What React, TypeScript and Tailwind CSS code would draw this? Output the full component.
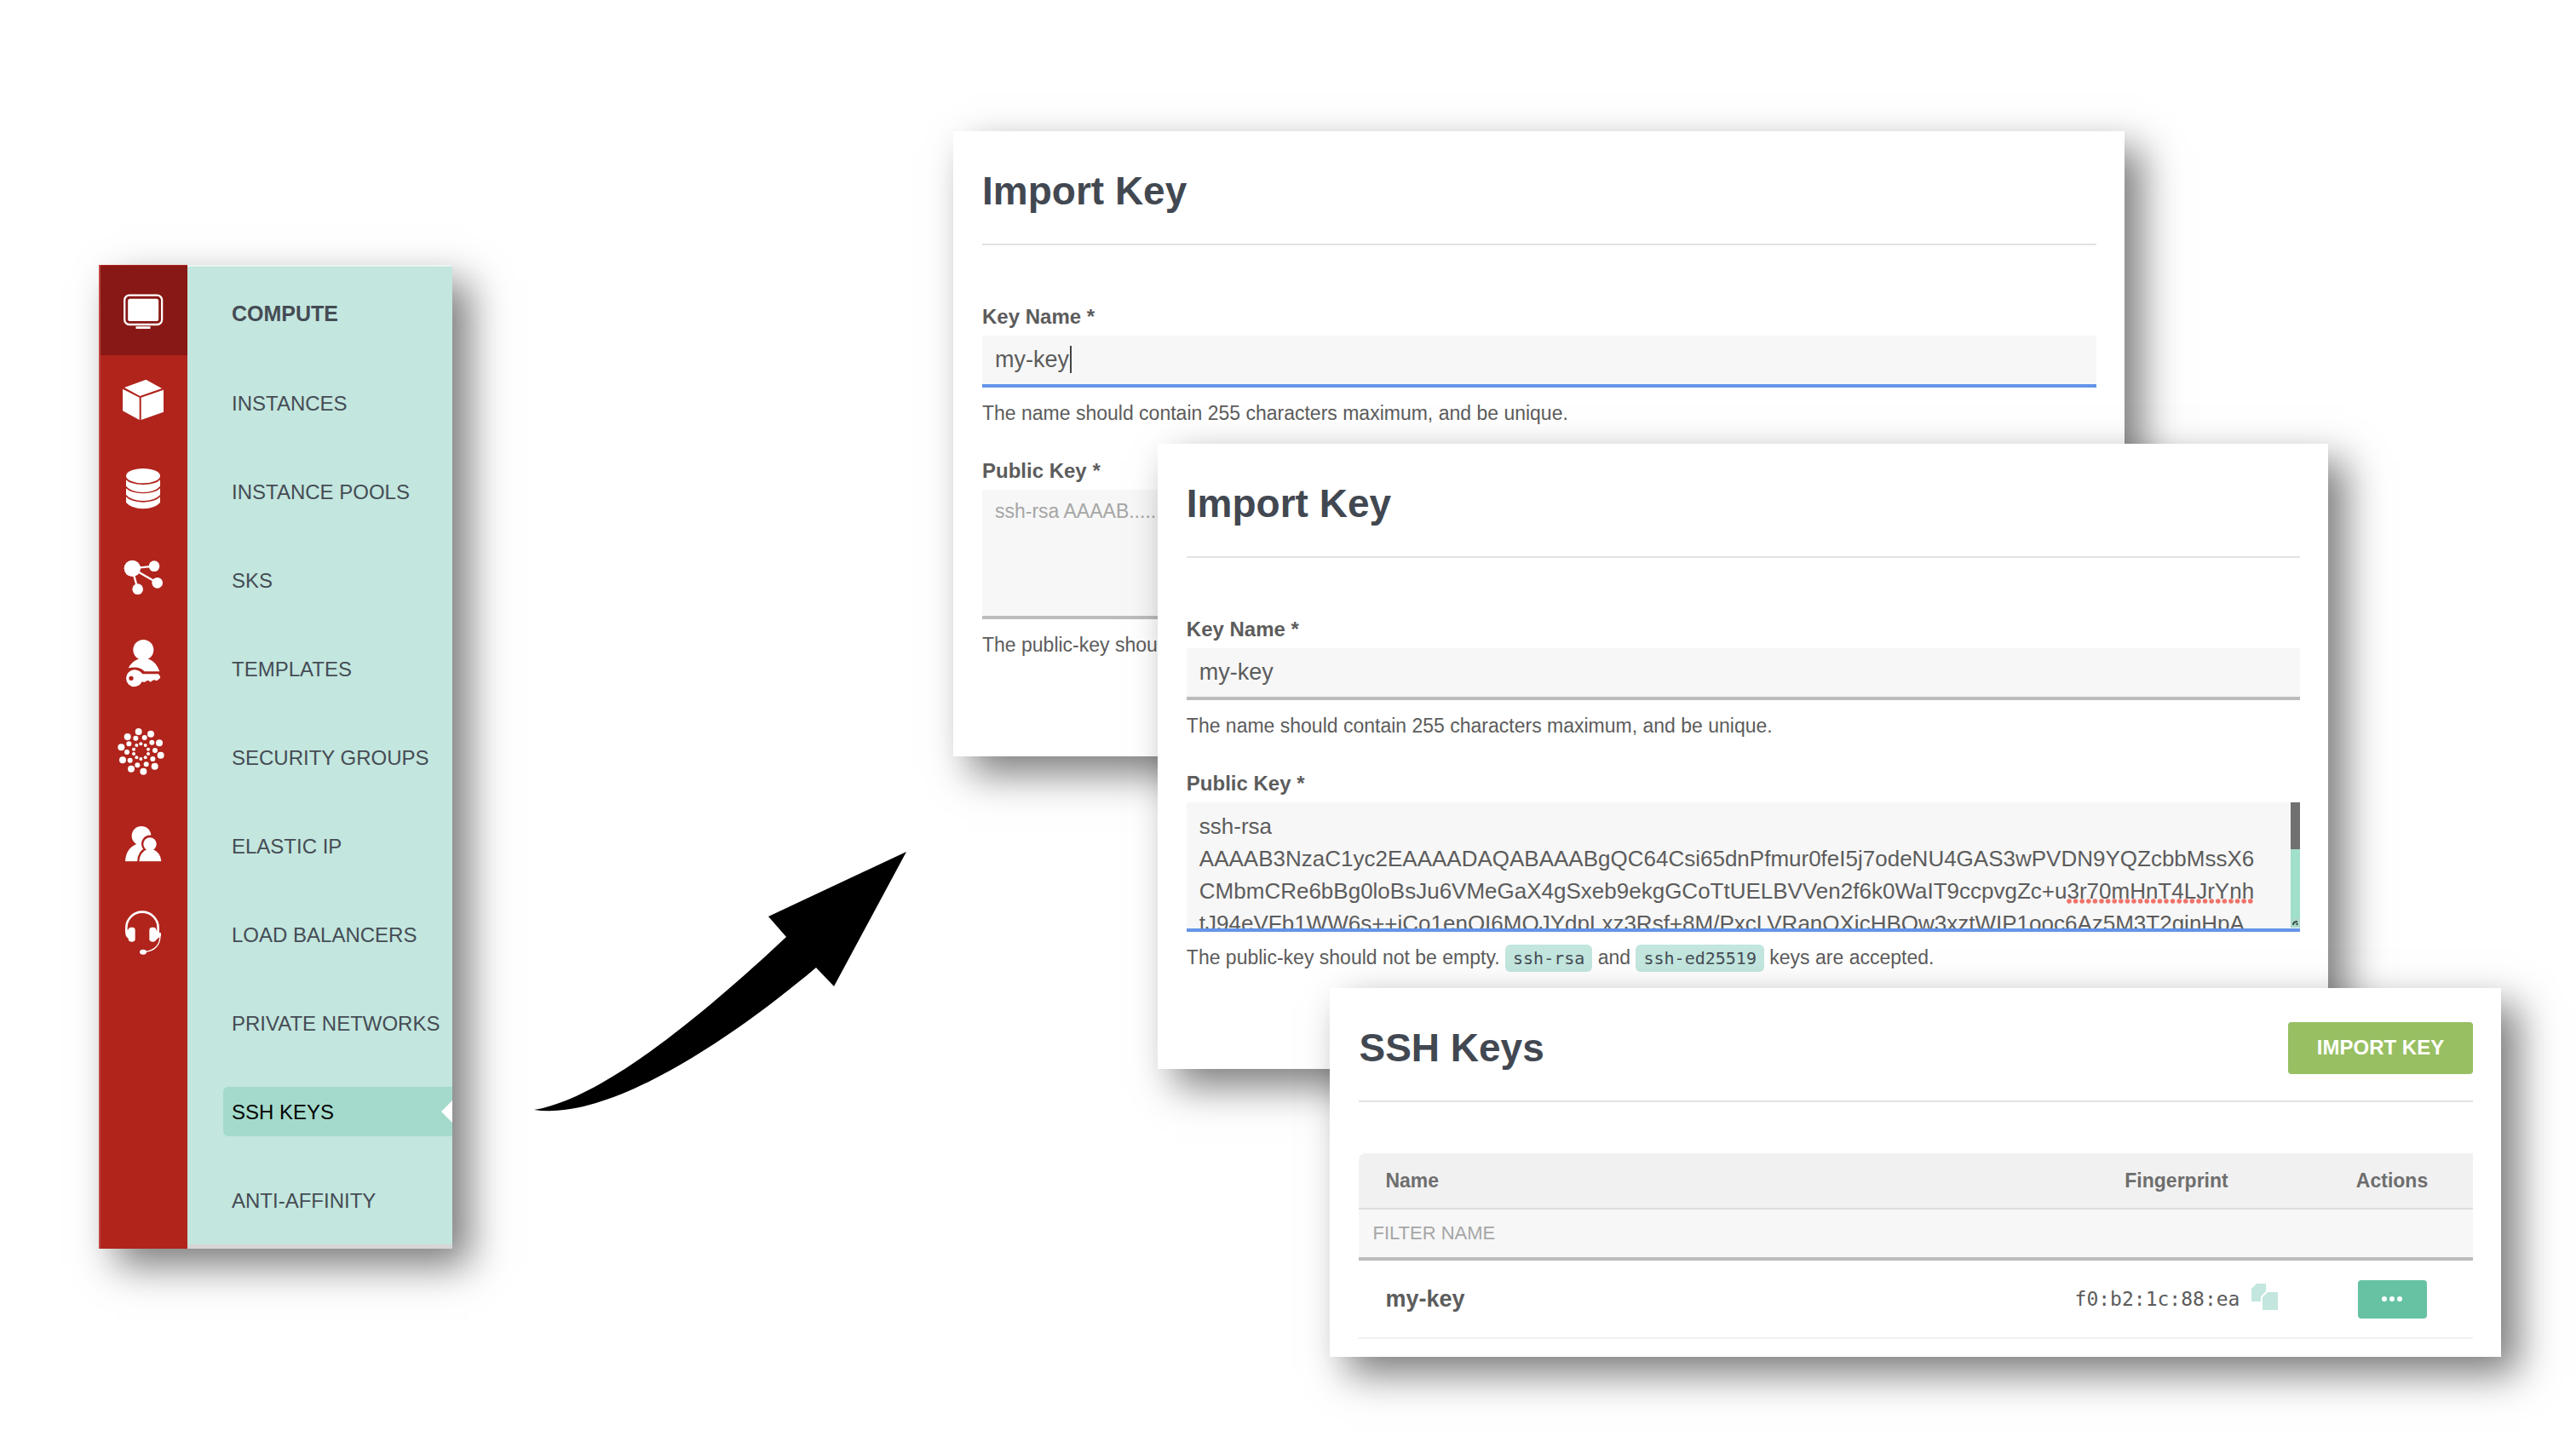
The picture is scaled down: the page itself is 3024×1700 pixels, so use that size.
import type { ReactNode } from "react";

const dotRings = [
  { r: 12, pts: [[158, 387], [201, 395], [231, 427], [236, 470], [215, 509], [175, 527], [132, 518], [102, 487], [97, 442], [119, 405]] },
  { r: 9, pts: [[148, 410], [179, 408], [205, 425], [216, 453], [208, 483], [185, 502], [154, 505], [128, 488], [117, 459], [124, 430]] },
  { r: 6, pts: [[166, 430], [182, 435], [192, 449], [192, 465], [182, 478], [166, 483], [151, 478], [141, 465], [141, 449], [151, 435]] },
];

const railItems: { name: string; viewBox: string; art: ReactNode }[] = [
  {
    name: "Compute",
    viewBox: "18 33 312 318",
    art: (
      <>
        <rect x="108" y="138" width="133" height="104" rx="17" fill="none" stroke="#fff" strokeWidth="7" />
        <rect x="120" y="150" width="109" height="80" rx="8" />
        <rect x="148" y="249" width="52" height="8" rx="2" />
      </>
    ),
  },
  {
    name: "Storage",
    viewBox: "18 351 312 312",
    art: (
      <>
        <path d="M108 465 184 437 240 468 163 495Z" />
        <path d="M102 470 161 500V579L102 547Z" />
        <path d="M167 500 246 473V551L167 579Z" />
      </>
    ),
  },
  {
    name: "Databases",
    viewBox: "18 663 312 312",
    art: (
      <>
        <ellipse cx="174" cy="776" rx="60" ry="26" />
        <path d="M114 790Q128 806 174 807Q220 806 234 790V812Q216 833 174 834Q132 833 114 812Z" />
        <path d="M114 820Q130 837 174 838Q218 837 234 820V843Q216 863 174 864Q132 863 114 843Z" />
        <path d="M114 850Q130 868 174 869Q218 868 234 850V870Q216 891 174 892Q132 891 114 870Z" />
      </>
    ),
  },
  {
    name: "DNS",
    viewBox: "18 975 312 312",
    art: (
      <>
        <path d="M135 1102 213 1094M135 1102 224 1153M135 1102 155 1175" fill="none" stroke="#fff" strokeWidth="7" />
        <circle cx="136" cy="1102" r="29" />
        <circle cx="213" cy="1094" r="19" />
        <circle cx="224" cy="1153" r="19" />
        <circle cx="155" cy="1175" r="19" />
      </>
    ),
  },
  {
    name: "IAM",
    viewBox: "18 -3 312 312",
    art: (
      <>
        <circle cx="175" cy="99" r="36" />
        <path d="M122 163Q133 141 155 132H196Q222 143 232 175H179Q162 155 122 163Z" />
        <path
          fillRule="evenodd"
          d="M144 169A30 30 0 1 0 144 229Q162 227 170 211L178 213 184 209 192 206 200 212 208 206 214 205 222 208 232 200 235 194 228 184H172Q162 170 144 169ZM132 191A8 8 0 1 1 132 207A8 8 0 1 1 132 191Z"
        />
      </>
    ),
  },
  {
    name: "Networks",
    viewBox: "18 309 312 312",
    art: dotRings.map(({ r, pts }) =>
      pts.map(([x, y]) => <circle key={`${x}-${y}`} cx={x} cy={y} r={r} />),
    ),
  },
  {
    name: "Organization",
    viewBox: "18 621 312 312",
    art: (
      <>
        <circle cx="168" cy="754" r="34" />
        <path d="M111 844Q113 797 152 782H190V844Z" />
        <path
          d="M160 847Q160 812 187 802A23 23 0 1 1 209 802Q236 812 238 847"
          stroke="#b0241c"
          strokeWidth="14"
          fill="#b0241c"
        />
        <circle cx="198" cy="783" r="23" />
        <path d="M160 844Q162 812 187 802H209Q236 812 238 844Z" />
        <path d="M100 845H250V858H100Z" fill="#b0241c" />
      </>
    ),
  },
  {
    name: "Support",
    viewBox: "18 933 312 312",
    art: (
      <>
        <path d="M115 1096V1078A56 56 0 0 1 227 1078V1096" fill="none" stroke="#fff" strokeWidth="8" />
        <rect x="122" y="1076" width="24" height="51" rx="10" />
        <rect x="196" y="1076" width="24" height="51" rx="10" />
        <path d="M124 1083Q111 1086 112 1099Q112 1110 124 1117ZM218 1083 230 1094 237 1096V1107L232 1110 218 1122Z" />
        <path d="M234 1104Q234 1157 178 1163" fill="none" stroke="#fff" strokeWidth="4" />
        <ellipse cx="174" cy="1163" rx="12" ry="9" />
      </>
    ),
  },
];

const menu = [
  "INSTANCES",
  "INSTANCE POOLS",
  "SKS",
  "TEMPLATES",
  "SECURITY GROUPS",
  "ELASTIC IP",
  "LOAD BALANCERS",
  "PRIVATE NETWORKS",
  "SSH KEYS",
  "ANTI-AFFINITY",
];

const publicKey = `ssh-rsa
AAAAB3NzaC1yc2EAAAADAQABAAABgQC64Csi65dnPfmur0feI5j7odeNU4GAS3wPVDN9YQZcbbMssX6
CMbmCRe6bBg0loBsJu6VMeGaX4gSxeb9ekgGCoTtUELBVVen2f6k0WaIT9ccpvgZc+u3r70mHnT4LJrYnh
tJ94eVFb1WW6s++iCo1enQI6MQJYdpLxz3Rsf+8M/PxcLVRanQXicHBQw3xztWIP1ooc6Az5M3T2ginHpA`;

const panel = "relative w-[75.65%] bg-white pl-[34px] pr-[33px] shadow-[20px_20px_44px_rgba(0,0,0,0.52)]";

function PanelHeader({ title, children }: { title: string; children?: ReactNode }) {
  return (
    <header className="flex h-[134px] items-center justify-between border-b-2 border-[#e2e2e2] pt-2">
      <h2 className="text-[46px] leading-[56px] font-bold text-[#424851]">{title}</h2>
      {children}
    </header>
  );
}

function Code({ children }: { children: string }) {
  return (
    <code className="rounded-md bg-[#c3e6de] px-[9px] py-1 font-['DejaVu_Sans_Mono',monospace] text-[20px] text-[#454c55]">
      {children}
    </code>
  );
}

function ImportKey({ id, filled, className }: { id: string; filled: boolean; className: string }) {
  return (
    <section className={`${panel} pb-[114px] ${className}`}>
      <PanelHeader title="Import Key" />
      <form className="pt-[68px]">
        <label htmlFor={`${id}-name`} className="mb-1.5 block text-[24px] leading-8 font-bold">
          Key Name *
        </label>
        <div className="relative">
          <input
            id={`${id}-name`}
            type="text"
            defaultValue="my-key"
            className={`block h-[61px] w-full border-b-4 bg-[#f7f7f7] px-[15px] text-[27px] outline-none ${
              filled ? "border-[#bcbcbc]" : "border-[#6494e8]"
            }`}
          />
          {!filled && <span className="absolute top-3 left-[103px] h-8 w-0.5 bg-[#444]" />}
        </div>
        <p className="mt-3.5 text-[23px] leading-8">
          The name should contain 255 characters maximum, and be unique.
        </p>
        <label htmlFor={`${id}-key`} className="mt-9 mb-1.5 block text-[24px] leading-8 font-bold">
          Public Key *
        </label>
        <div className="relative">
          {filled ? (
            <>
              <textarea
                id={`${id}-key`}
                defaultValue={publicKey}
                spellCheck={false}
                className="block h-[152px] w-full resize-none overflow-hidden border-b-4 border-[#6494e8] bg-[#f7f7f7] px-[15px] pt-[9px] text-[26px] leading-[38px] whitespace-pre outline-none"
              />
              <svg viewBox="0 0 222 6" className="absolute top-[113px] right-[52px] h-1.5 w-[222px]">
                <path d="M3 3H219" stroke="#f0736a" strokeWidth="5.6" strokeLinecap="round" strokeDasharray="0 7.6" />
              </svg>
              <div className="absolute top-0 right-0 flex h-[147px] w-[11px] flex-col bg-[#9fdfcb]">
                <div className="h-[55px] bg-[#707070]" />
                <svg viewBox="0 0 11 11" className="mt-auto h-[11px] w-[11px] bg-[#a9d9ca]">
                  <path d="M3 8Q3 4 8 4M7 8 8 6" fill="none" stroke="#3c4a46" strokeWidth="2" />
                </svg>
              </div>
            </>
          ) : (
            <textarea
              id={`${id}-key`}
              placeholder="ssh-rsa AAAAB....."
              className="block h-[152px] w-full resize-none border-b-4 border-[#bcbcbc] bg-[#f7f7f7] px-[15px] pt-[9px] text-[23px] leading-8 outline-none placeholder:text-[#a6a6a6]"
            />
          )}
        </div>
        <p className="mt-3.5 text-[23px] leading-8">
          The public-key should not be empty. <Code>ssh-rsa</Code> and <Code>ssh-ed25519</Code> keys are accepted.
        </p>
      </form>
    </section>
  );
}

function SshKeys() {
  return (
    <section className={`${panel} -mt-[95px] self-end pb-[21px]`}>
      <PanelHeader title="SSH Keys">
        <button className="h-[61px] w-[217px] rounded bg-[#98bf62] text-[24px] font-bold whitespace-nowrap text-white">
          IMPORT KEY
        </button>
      </PanelHeader>
      <table className="mt-[60px] w-full table-fixed border-separate border-spacing-0">
        <colgroup>
          <col />
          <col className="w-[316px]" />
          <col className="w-[190px]" />
        </colgroup>
        <thead className="text-[23px] text-[#6e6e6e]">
          <tr className="h-[66px]">
            <th className="rounded-tl-lg border-b-2 border-[#dedede] bg-[#f1f1f1] pl-[31px] text-left">Name</th>
            <th className="border-b-2 border-[#dedede] bg-[#f1f1f1]">Fingerprint</th>
            <th className="border-b-2 border-[#dedede] bg-[#f1f1f1]">Actions</th>
          </tr>
          <tr>
            <td colSpan={3} className="p-0">
              <input
                type="text"
                aria-label="Filter name"
                placeholder="FILTER NAME"
                className="block h-[60px] w-full border-b-4 border-[#bcbcbc] bg-[#f7f7f7] px-4 text-[22px] outline-none placeholder:text-[#a6a6a6]"
              />
            </td>
          </tr>
        </thead>
        <tbody>
          <tr className="h-[92px]">
            <td className="border-b-2 border-[#f1f1f1] pl-[31px] text-[27px] font-bold">my-key</td>
            <td className="border-b-2 border-[#f1f1f1] p-0">
              <div className="flex items-center justify-center gap-3.5">
                <code className="font-['DejaVu_Sans_Mono',monospace] text-[23px]">f0:b2:1c:88:ea</code>
                <button aria-label="Copy fingerprint" className="pb-1.5">
                  <svg viewBox="0 0 31 31" className="h-[31px] w-[31px]" fill="#c3e6de">
                    <path d="M0 6 6 0H17V9L11 15V21H0Z" />
                    <path d="M13 16 19 10H31V31H13Z" />
                  </svg>
                </button>
              </div>
            </td>
            <td className="border-b-2 border-[#f1f1f1] p-0 text-center">
              <button aria-label="More actions" className="inline-flex h-[45px] w-[81px] items-center justify-center gap-[3px] rounded bg-[#66c2a3] align-middle">
                <span className="size-1.5 rounded-full bg-white" />
                <span className="size-1.5 rounded-full bg-white" />
                <span className="size-1.5 rounded-full bg-white" />
              </button>
            </td>
          </tr>
        </tbody>
      </table>
    </section>
  );
}

function Sidebar() {
  return (
    <aside className="mt-[311px] ml-[116px] flex w-[415px] shrink-0 shadow-[20px_20px_44px_rgba(0,0,0,0.52)]">
      <nav aria-label="Products" className="flex w-[104px] flex-col border-l-2 border-[#bf4440] bg-[#b0241c]">
        {railItems.map(({ name, viewBox, art }, i) => (
          <a
            key={name}
            href="#"
            aria-label={name}
            className={i === 0 ? "h-[106px] border-t border-[#b0241c] bg-[#881815]" : "h-[104px]"}
          >
            <svg viewBox={viewBox} fill="#fff" className="-ml-0.5 h-full w-[104px]">
              {art}
            </svg>
          </a>
        ))}
      </nav>
      <nav aria-label="Compute" className="flex-1 border-t-2 border-b-[5px] border-t-[#eef3f2] border-b-[#d6d6d6] bg-[#c3e6de] pl-[42px] text-[24px] text-[#454c55]">
        <h2 className="flex h-[108px] items-center pt-1 pl-[10px] text-[25px] font-bold">COMPUTE</h2>
        {menu.map((item) => (
          <div key={item} className="flex h-[104px] items-center">
            <a
              href="#"
              className={`relative flex h-[58px] w-full items-center rounded-l-md pt-0.5 pl-[10px] whitespace-nowrap ${
                item === "SSH KEYS" ? "bg-[#a4dacb] text-black" : ""
              }`}
            >
              {item}
              {item === "SSH KEYS" && (
                <svg viewBox="0 0 13 26" className="absolute top-4 right-0 h-[26px] w-[13px]" fill="#fff">
                  <path d="M13 0V26L0 13Z" />
                </svg>
              )}
            </a>
          </div>
        ))}
      </nav>
    </aside>
  );
}

export default function App() {
  return (
    <main className="flex min-h-screen items-start overflow-hidden bg-white font-['Liberation_Sans',Arial,sans-serif] text-[#5c5c5c]">
      <Sidebar />
      <svg viewBox="0 0 437 306" className="mt-[1000px] mr-[55px] ml-24 w-[437px] shrink-0">
        <path d="M0 303C80 290 200 190 296 100L275 76 437 0 352 158 331 136C230 221 88 316 0 303Z" />
      </svg>
      <div className="mt-[154px] mr-[88px] mb-[108px] flex min-w-0 flex-1 flex-col">
        <ImportKey id="empty" filled={false} className="" />
        <ImportKey id="filled" filled className="-mt-[367px] ml-[13.2%]" />
        <SshKeys />
      </div>
    </main>
  );
}
